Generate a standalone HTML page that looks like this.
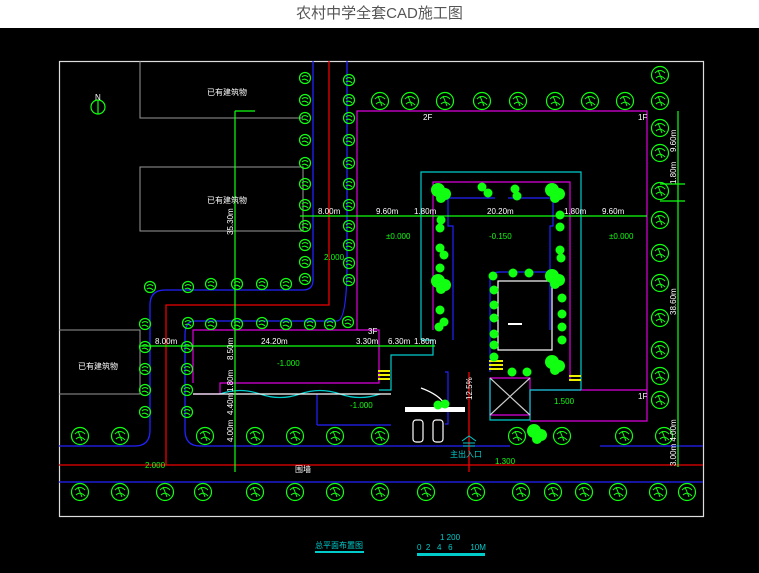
<!DOCTYPE html>
<html><head><meta charset="utf-8"><style>
html,body{margin:0;padding:0;background:#000;width:759px;height:573px;overflow:hidden}
.top{position:absolute;left:0;top:0;width:759px;height:28px;background:#fff;text-align:center;font:15px "Liberation Sans","Noto Sans CJK SC",sans-serif;color:#555;line-height:28px}
svg{position:absolute;left:0;top:28px}
text{font-family:"Liberation Sans","Noto Sans CJK SC",sans-serif;fill:#fff;font-size:8px}
</style></head><body>
<div class="top">农村中学全套CAD施工图</div>
<svg width="759" height="545" viewBox="0 28 759 545" xmlns="http://www.w3.org/2000/svg">
<defs>
<g id="t"><circle r="8.5" fill="none" stroke="#1f1" stroke-width="1.2"/><path d="M-5,-2 Q0,-7 5,-2 M-4,3 Q0,-1 5,4 M-2,-5 L2,5" stroke="#1f1" fill="none" stroke-width="1"/></g>
<g id="s"><circle r="5.5" fill="none" stroke="#1f1" stroke-width="1.2"/><path d="M-3,-1 Q0,-4 3,-1 M-3,2 Q0,0 3,3" stroke="#1f1" fill="none"/></g>
<g id="b"><circle cx="-3" cy="-2" r="7" fill="#1f1"/><circle cx="4" cy="2" r="6" fill="#1f1"/><circle cx="0" cy="6" r="5" fill="#1f1"/></g>
<circle id="d" r="4.5" fill="#1f1"/>
</defs>
<rect x="59.5" y="61.5" width="644" height="455" fill="none" stroke="#ddd" stroke-width="1.2"/>
<path d="M140,61V118H303M140,167H303V231H140Z M59,330H140V394H59" fill="none" stroke="#999"/>
<g fill="none" stroke="#22f" stroke-width="1.3">
<path d="M313,61V280Q313,290 303,290H165Q150,290 150,305V430Q150,446 135,446H59"/>
<path d="M347,61V262Q347,321 337,321H195Q185,321 185,335V430Q185,446 200,446H510"/>
<path d="M600,446H703M59,482H703"/>
</g>
<g fill="none" stroke="#e00" stroke-width="1.3">
<path d="M329,61V305H166V465M59,465H703"/>
<path d="M469,372V472"/>
</g>
<g fill="none" stroke="#d0d" stroke-width="1.2">
<path d="M357,330V111H647V421H530"/>
<path d="M433,330V182H570V380"/>
<path d="M193,383V330H379V383H220V394H193"/>
<path d="M490,378H530V415H490Z"/>
<path d="M530,390H647"/>
</g>
<g fill="none" stroke="#0cc" stroke-width="1.2">
<path d="M421,340V172H581V390M421,340H433V355H391V390H379"/>
<path d="M220,394Q240,387 260,394T300,394T340,394T380,394"/>
<path d="M490,378V420H530V390H581"/>
</g>
<rect x="417" y="553" width="68" height="3" fill="#0cc"/>
<rect x="315" y="551" width="49" height="2" fill="#0cc"/>
<g fill="none" stroke="#22f" stroke-width="1.2">
<path d="M453,340V226H448V198H495M508,198H553V226H550V330"/>
<path d="M490,372V280Q490,272 500,272H550"/>
<path d="M317,425V394M317,425H391"/>
<path d="M445,372H448V424H445"/>
</g>
<g fill="none" stroke="#fff" stroke-width="1.2">
<rect x="498" y="281" width="54" height="69"/>
<path d="M193,394H391M421,388Q440,395 445,405"/>
<path d="M490,378L530,415M530,378L490,415" stroke="#ccc"/>
<rect x="413" y="420" width="10" height="22" rx="3"/><rect x="433" y="420" width="10" height="22" rx="3"/>
</g>
<rect x="405" y="407" width="60" height="5" fill="#fff"/>
<rect x="508" y="323" width="14" height="2" fill="#fff"/>
<g fill="#ee0"><rect x="378" y="370" width="12" height="2"/><rect x="378" y="374" width="12" height="2"/><rect x="378" y="378" width="12" height="2"/><rect x="489" y="360" width="14" height="2"/><rect x="489" y="364" width="14" height="2"/><rect x="489" y="368" width="14" height="2"/><rect x="569" y="375" width="12" height="2"/><rect x="569" y="379" width="12" height="2"/></g>
<g stroke="#1f1" stroke-width="1.2" fill="none">
<path d="M300,216H647M235,111V472M678,111V467M140,346H435M235,111H255M660,201H685M660,184H685"/>
<circle cx="98" cy="107" r="7"/><path d="M98,100V114"/>
</g>
<g>
<use href="#t" x="380" y="101"/><use href="#t" x="410" y="101"/><use href="#t" x="445" y="101"/><use href="#t" x="482" y="101"/><use href="#t" x="518" y="101"/><use href="#t" x="555" y="101"/><use href="#t" x="590" y="101"/><use href="#t" x="625" y="101"/><use href="#t" x="660" y="101"/>
<use href="#t" x="660" y="75"/><use href="#t" x="660" y="128"/><use href="#t" x="660" y="153"/><use href="#t" x="660" y="191"/><use href="#t" x="660" y="220"/><use href="#t" x="660" y="253"/><use href="#t" x="660" y="283"/><use href="#t" x="660" y="318"/><use href="#t" x="660" y="350"/><use href="#t" x="660" y="376"/><use href="#t" x="660" y="400"/>
<use href="#s" x="305" y="78"/><use href="#s" x="305" y="100"/><use href="#s" x="305" y="118"/><use href="#s" x="305" y="140"/><use href="#s" x="305" y="163"/><use href="#s" x="305" y="184"/><use href="#s" x="305" y="205"/><use href="#s" x="305" y="226"/><use href="#s" x="305" y="245"/><use href="#s" x="305" y="262"/><use href="#s" x="305" y="279"/>
<use href="#s" x="349" y="80"/><use href="#s" x="349" y="100"/><use href="#s" x="349" y="118"/><use href="#s" x="349" y="140"/><use href="#s" x="349" y="163"/><use href="#s" x="349" y="184"/><use href="#s" x="349" y="205"/><use href="#s" x="349" y="226"/><use href="#s" x="349" y="245"/><use href="#s" x="349" y="263"/><use href="#s" x="349" y="280"/>
<use href="#s" x="188" y="323"/><use href="#s" x="211" y="324"/><use href="#s" x="237" y="324"/><use href="#s" x="262" y="323"/><use href="#s" x="286" y="324"/><use href="#s" x="310" y="324"/><use href="#s" x="330" y="324"/><use href="#s" x="348" y="322"/><use href="#s" x="150" y="287"/><use href="#s" x="188" y="287"/><use href="#s" x="211" y="284"/><use href="#s" x="237" y="284"/><use href="#s" x="262" y="284"/><use href="#s" x="286" y="284"/>
<use href="#s" x="145" y="324"/><use href="#s" x="145" y="347"/><use href="#s" x="145" y="369"/><use href="#s" x="145" y="390"/><use href="#s" x="145" y="412"/>
<use href="#s" x="187" y="347"/><use href="#s" x="187" y="369"/><use href="#s" x="187" y="390"/><use href="#s" x="187" y="412"/>
<use href="#t" x="80" y="436"/><use href="#t" x="120" y="436"/><use href="#t" x="205" y="436"/><use href="#t" x="255" y="436"/><use href="#t" x="295" y="436"/><use href="#t" x="335" y="436"/><use href="#t" x="380" y="436"/><use href="#t" x="517" y="436"/><use href="#t" x="562" y="436"/><use href="#t" x="624" y="436"/><use href="#t" x="664" y="436"/>
<use href="#t" x="80" y="492"/><use href="#t" x="120" y="492"/><use href="#t" x="165" y="492"/><use href="#t" x="203" y="492"/><use href="#t" x="255" y="492"/><use href="#t" x="295" y="492"/><use href="#t" x="335" y="492"/><use href="#t" x="380" y="492"/><use href="#t" x="426" y="492"/><use href="#t" x="476" y="492"/><use href="#t" x="521" y="492"/><use href="#t" x="553" y="492"/><use href="#t" x="584" y="492"/><use href="#t" x="618" y="492"/><use href="#t" x="658" y="492"/><use href="#t" x="687" y="492"/>
<use href="#b" x="441" y="192"/><use href="#b" x="555" y="192"/><use href="#b" x="441" y="283"/><use href="#b" x="555" y="278"/><use href="#b" x="555" y="364"/><use href="#b" x="537" y="433"/>
<use href="#d" x="482" y="187"/><use href="#d" x="488" y="193"/><use href="#d" x="515" y="189"/><use href="#d" x="517" y="196"/><use href="#d" x="441" y="220"/><use href="#d" x="440" y="228"/><use href="#d" x="560" y="215"/><use href="#d" x="560" y="227"/><use href="#d" x="440" y="248"/><use href="#d" x="444" y="255"/><use href="#d" x="440" y="268"/><use href="#d" x="560" y="250"/><use href="#d" x="561" y="258"/><use href="#d" x="440" y="310"/><use href="#d" x="444" y="322"/><use href="#d" x="439" y="327"/><use href="#d" x="494" y="290"/><use href="#d" x="494" y="305"/><use href="#d" x="494" y="318"/><use href="#d" x="494" y="334"/><use href="#d" x="494" y="345"/><use href="#d" x="494" y="357"/><use href="#d" x="493" y="276"/><use href="#d" x="513" y="273"/><use href="#d" x="529" y="273"/><use href="#d" x="562" y="298"/><use href="#d" x="562" y="314"/><use href="#d" x="562" y="327"/><use href="#d" x="562" y="340"/><use href="#d" x="512" y="372"/><use href="#d" x="527" y="372"/><use href="#d" x="438" y="405"/><use href="#d" x="445" y="404"/>
</g>
<text x="95" y="100" font-size="7">N</text>
<text x="207" y="95" font-size="6">已有建筑物</text>
<text x="207" y="203" font-size="6">已有建筑物</text>
<text x="78" y="369" font-size="6">已有建筑物</text>
<text x="318" y="214">8.00m</text><text x="376" y="214">9.60m</text><text x="414" y="214">1.80m</text><text x="487" y="214">20.20m</text><text x="564" y="214">1.80m</text><text x="602" y="214">9.60m</text>
<text x="155" y="344">8.00m</text><text x="261" y="344">24.20m</text><text x="356" y="344">3.30m</text><text x="388" y="344">6.30m</text><text x="414" y="344">1.80m</text>
<text transform="translate(233,235) rotate(-90)">35.30m</text>
<text transform="translate(233,360) rotate(-90)">8.50m</text>
<text transform="translate(233,392) rotate(-90)">1.80m</text>
<text transform="translate(233,415) rotate(-90)">4.40m</text>
<text transform="translate(233,442) rotate(-90)">4.00m</text>
<text transform="translate(676,152) rotate(-90)">9.60m</text>
<text transform="translate(676,184) rotate(-90)">1.80m</text>
<text transform="translate(676,315) rotate(-90)">38.60m</text>
<text transform="translate(676,466) rotate(-90)">3.00m 4.00m</text>
<text transform="translate(472,400) rotate(-90)" font-size="7">12.5%</text>
<text x="423" y="120" font-size="6">2F</text><text x="638" y="120" font-size="6">1F</text><text x="638" y="399" font-size="6">1F</text><text x="368" y="334" font-size="6">3F</text>
<g font-size="5"><text x="386" y="239" style="fill:#1f1">±0.000</text><text x="489" y="239" style="fill:#1f1">-0.150</text><text x="609" y="239" style="fill:#1f1">±0.000</text><text x="324" y="260" style="fill:#1f1">2.000</text><text x="277" y="366" style="fill:#1f1">-1.000</text><text x="350" y="408" style="fill:#1f1">-1.000</text><text x="145" y="468" style="fill:#1f1">2.000</text><text x="495" y="464" style="fill:#1f1">1.300</text><text x="554" y="404" style="fill:#1f1">1.500</text></g>
<text x="295" y="472" font-size="6">围墙</text>
<text x="450" y="457" font-size="9" style="fill:#0cc">主出入口</text>
<text x="315" y="548" font-size="9" style="fill:#0cc">总平面布置图</text>
<text x="440" y="540" font-size="7" style="fill:#0cc">1 200</text>
<text x="417" y="550" font-size="7" style="fill:#0cc" xml:space="preserve">0  2   4   6        10M</text>
<path d="M462,441L469,436L476,441M463,443H475M463,446H475" stroke="#0cc" fill="none"/>
</svg>
</body></html>
